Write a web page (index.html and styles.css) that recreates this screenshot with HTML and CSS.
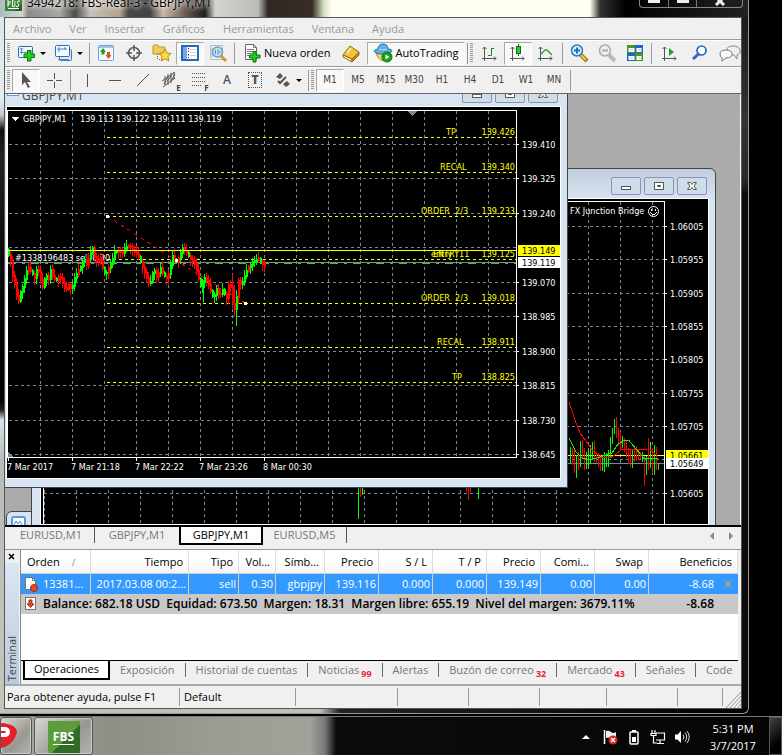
FILE: index.html
```html
<!DOCTYPE html>
<html lang="es">
<head>
<meta charset="utf-8">
<title>FBS-Real-3 - GBPJPY,M1</title>
<link rel="stylesheet" href="styles.css">
</head>
<body>
<div class="app">
  <header class="titlebar">
    <svg class="app-icon" width="17" height="11" viewBox="0 0 17 11"><rect width="17" height="11" rx="1" fill="#3d8136"/><path d="M9 11l8-7v7z" fill="#28602a"/><path d="M3 2h3M3 0v7M3 4h2.500M7.500 0v6.500h2q1.500-1.500 0-3 1.500-2-.5-3M15 1h-2q-1.500 1.500 0 2.500t0 3h-2M3 8.500h11" fill="none" stroke="#fff"/></svg>
    <span class="title">3494218: FBS-Real-3 - GBPJPY,M1</span>
    <div class="caption">
      <button aria-label="Minimizar"><i class="cap-min"></i></button>
      <button aria-label="Maximizar"><i class="cap-min"></i></button>
      <button class="wide" aria-label="Cerrar"><svg width="12" height="6" viewBox="0 0 12 6"><path d="M2-3l8 8M10-3L2 5" stroke="#eee" stroke-width="3"/></svg></button>
    </div>
  </header>

  <div class="client">
    <nav class="menu">
      <button>Archivo</button><button>Ver</button><button>Insertar</button><button>Gráficos</button><button>Herramientas</button><button>Ventana</button><button>Ayuda</button>
    </nav>

    <div class="toolbar">
      <i class="grip"></i>
      <button class="tool drop" aria-label="Nuevo gráfico"><svg width="20" height="20" viewBox="0 0 20 20"><rect x="1.500" y="3.500" width="14" height="11" rx="1" fill="#eef5fd" stroke="#2c6db4"/><path d="M4.500 5v6M3 6.500l1.500-1.500L6 6.500M3 9.500h9M11 7.500l2 2-2 2" fill="none" stroke="#4c86bd"/><path d="M10.500 7.500h3.500v3.500h3.500v3.500H14V18h-3.500v-3.500H7V11h3.500z" fill="#20d020" stroke="#087408"/></svg><i class="arrow"></i></button>
      <button class="tool drop" aria-label="Perfiles"><svg width="20" height="20" viewBox="0 0 20 20"><rect x="5.500" y="6.500" width="12" height="11" rx="1" fill="#d9e8f7" stroke="#4079b5"/><rect x="1.500" y="2.500" width="14" height="11" rx="1" fill="#f4f9ff" stroke="#2c6db4"/><path d="M5 4v5M3 6h10M11 4v3M4 16.500h11" fill="none" stroke="#4c86bd"/></svg><i class="arrow"></i></button>
      <i class="sep"></i>
      <button class="tool" aria-label="Observación de mercado"><svg width="20" height="20" viewBox="0 0 20 20"><rect x="2.500" y="2.500" width="15" height="15" rx="1" fill="#f7fbff" stroke="#67a4dc"/><path d="M3 3h14v2H3z" fill="#9bc8ee"/><path d="M4 9l3-4 3 4H8.500v2.500h-3V9z" fill="#16a816"/><path d="M9.500 12l3 4 3-4H14V9h-3v3z" fill="#e04e20"/></svg></button>
      <button class="tool" aria-label="Ventana de datos"><svg width="20" height="20" viewBox="0 0 20 20"><circle cx="10" cy="10" r="5.500" fill="none" stroke="#555" stroke-width="1.500"/><path d="M10 2v6M10 12v6M2 10h6M12 10h6" stroke="#555" stroke-width="1.500"/></svg></button>
      <button class="tool" aria-label="Navegador"><svg width="20" height="20" viewBox="0 0 20 20"><path d="M1 3.500q0-1.500 1.500-1.500h3l1.500 2h5q1 0 1 1v6H1z" fill="#f3ca52" stroke="#c19323"/><path d="M5.500 11v6M7 16.500h3" stroke="#666" stroke-dasharray="1 1"/><path d="M13 6l2 4 4 .5-3 3 .8 4.500-3.800-2.200L9.200 18l.8-4.500-3-3 4-.5z" fill="#ffd848" stroke="#b88a17"/></svg></button>
      <button class="tool on" aria-label="Terminal"><svg width="20" height="20" viewBox="0 0 20 20"><rect x="2" y="3" width="16" height="14" fill="#fff" stroke="#2569bd" stroke-width="2"/><path d="M3 4h4v12H3z" fill="#71a9ea"/><path d="M8.500 5v10" stroke="#222" stroke-dasharray="1 2"/><path d="M10 6.500h6M10 9.500h6M10 12.500h6" stroke="#c9d6e5"/><path d="M8 6h1M8 12h1" stroke="red"/></svg></button>
      <button class="tool" aria-label="Probador"><svg width="20" height="20" viewBox="0 0 20 20"><path d="M2.500 2.500h12v14h-12z" fill="#eee" stroke="#b5bcc4"/><path d="M4 5v9M7 4v10" stroke="#a6b5c4"/><path d="M13 13l5 5" stroke="#d59b1c" stroke-width="3"/><circle cx="9.500" cy="9" r="5" fill="#cfe6f8" stroke="#6b9dc9" stroke-width="1.500"/><path d="M7.500 7v4M10 6v6M12 8v2" stroke="#5485b8"/></svg></button>
      <i class="sep"></i>
      <button class="tool text"><svg width="20" height="20" viewBox="0 0 20 20"><path d="M3.500 1.500h8l3 3v12h-11z" fill="#fff" stroke="#666"/><path d="M11.500 1.500v3h3M5 6.500h7M5 8.500h7M5 10.500h5M5 12.500h4" fill="none" stroke="#777"/><path d="M11 8.500h3V12h4v3h-4v4h-3v-4H7.500v-3H11z" fill="#20d020" stroke="#087408"/></svg>Nueva orden</button>
      <button class="tool wide" aria-label="MetaEditor"><svg width="20" height="20" viewBox="0 0 20 20"><path d="M2 12l7-9 9 6-7 7z" fill="#f3c23d" stroke="#98650d"/><path d="M2 12l9 4v3l-9-5z" fill="#fff2c0" stroke="#98650d"/><path d="M11 16l7-7v3l-7 7z" fill="#c98915" stroke="#98650d"/><path d="M6 10l4-5" stroke="#ffeaa0" stroke-width="2"/></svg></button>
      <button class="tool text on"><svg width="20" height="20" viewBox="0 0 20 20"><path d="M3 9h14q-1 7-7 9Q4 16 3 9z" fill="#f0ce62" stroke="#b99025"/><path d="M1 8q1-2 4-2 0-5 5-5t5 5q4 0 4 2-1 3-9 3T1 8z" fill="#5faee0" stroke="#2d75ad"/><path d="M6 6q4 2 8 0" fill="none" stroke="#b8e0f8"/><circle cx="14" cy="14" r="5" fill="#16a516" stroke="#0a750a"/><path d="M12.500 11.500v5l4-2.500z" fill="#fff"/></svg>AutoTrading</button>
      <i class="sep"></i><i class="grip"></i>
      <button class="tool" aria-label="Barras"><svg width="20" height="20" viewBox="0 0 20 20"><path d="M4.500 4v14M2 15.500h14M2.500 6l2-2 2 2M14 13.500l2 2-2 2" fill="none" stroke="#555"/><path d="M8 12.500h3.500V5M11 5.500h3" fill="none" stroke="#158a25"/></svg></button>
      <button class="tool on" aria-label="Velas"><svg width="20" height="20" viewBox="0 0 20 20"><path d="M4.500 4v14M2 15.500h14M2.500 6l2-2 2 2M14 13.500l2 2-2 2" fill="none" stroke="#555"/><path d="M10.500 1v12" stroke="#087408"/><rect x="8.500" y="3.500" width="4" height="7" fill="#20d040" stroke="#087408"/></svg></button>
      <button class="tool" aria-label="Línea"><svg width="20" height="20" viewBox="0 0 20 20"><path d="M4.500 4v14M2 15.500h14M2.500 6l2-2 2 2M14 13.500l2 2-2 2" fill="none" stroke="#555"/><path d="M4 12l5-5q2-1 3 1l4 4" fill="none" stroke="#3a9d45" stroke-width="1.500"/></svg></button>
      <i class="sep"></i>
      <button class="tool" aria-label="Acercar"><svg width="20" height="20" viewBox="0 0 20 20"><path d="M12 12l6 6" stroke="#a3750c" stroke-width="4"/><path d="M12 12l5 5" stroke="#f1c93a" stroke-width="2"/><circle cx="8" cy="7.500" r="5.500" fill="#d4edfd" stroke="#2c7ab5" stroke-width="1.500"/><path d="M5 7.500h6M8 4.500v6" stroke="#1d75b5" stroke-width="2"/></svg></button>
      <button class="tool" aria-label="Alejar"><svg width="20" height="20" viewBox="0 0 20 20"><path d="M12 12l6 6" stroke="#bbb" stroke-width="4"/><circle cx="8" cy="7.500" r="5.500" fill="#eee" stroke="#aaa" stroke-width="1.500"/><path d="M5 7.500h6" stroke="#aaa" stroke-width="2"/></svg></button>
      <button class="tool" aria-label="Mosaico"><svg width="20" height="20" viewBox="0 0 20 20"><path d="M2 2h8v8H2zM10 10h8v8h-8z" fill="#429b19"/><path d="M10 2h8v8h-8zM2 10h8v8H2z" fill="#2860d2"/><path d="M3.500 5h6v4h-6zM11.500 5h5v4h-5zM3.500 13h6v4h-6zM11.500 13h5v4h-5z" fill="#fff"/><path d="M5 7h3M13 7h3M5 15h3M13 15h3" stroke="#b4c6df"/></svg></button>
      <i class="sep"></i>
      <button class="tool wide" aria-label="Desplazamiento"><svg width="20" height="20" viewBox="0 0 20 20"><path d="M4.500 4v14M2 15.500h14M2.500 6l2-2 2 2M14 13.500l2 2-2 2" fill="none" stroke="#555"/><path d="M9 5v8l5-4z" fill="#17a32c"/></svg></button>
      <button class="tool" aria-label="Buscar"><svg width="20" height="20" viewBox="0 0 20 20"><path d="M8.500 11L3 16" stroke="#3468ad" stroke-width="3"/><circle cx="11.500" cy="7.500" r="4.500" fill="#fff" stroke="#2865d0" stroke-width="1.700"/></svg></button>
      <button class="tool wide" aria-label="Chat"><svg width="24" height="20" viewBox="0 0 24 20"><path d="M16 12l3 4v-4q4-1 3-5-1-4-7-4t-6 4q0 5 7 5z" fill="#eee" stroke="#888"/><path d="M4 15v3l4-3q6 0 6-4t-6-4-6 4q0 3 2 4z" fill="#fafafa" stroke="#777"/></svg></button>
    </div>

    <div class="toolbar second">
      <i class="grip"></i>
      <button class="tool on" aria-label="Cursor"><svg width="20" height="20" viewBox="0 0 20 20"><path d="M6 2v13l3-3 3 6 2-1-3-5h4z" fill="#555"/></svg></button>
      <button class="tool" aria-label="Cruz"><svg width="20" height="20" viewBox="0 0 20 20"><path d="M10.500 3v6M10.500 12v6M3 10.500h6M12 10.500h6" stroke="#555"/></svg></button>
      <i class="sep"></i>
      <button class="tool" aria-label="Línea vertical"><svg width="20" height="20" viewBox="0 0 20 20"><path d="M10.500 4v13" stroke="#555"/></svg></button>
      <button class="tool" aria-label="Línea horizontal"><svg width="20" height="20" viewBox="0 0 20 20"><path d="M4 10.500h12" stroke="#555"/></svg></button>
      <button class="tool" aria-label="Línea de tendencia"><svg width="20" height="20" viewBox="0 0 20 20"><path d="M4 16L16 4" stroke="#555"/></svg></button>
      <button class="tool" aria-label="Canal"><svg width="20" height="20" viewBox="0 0 20 20"><path d="M1 11L14 2M2 17L14 8M4 6v9M7 4v11M10 3v10M13 2v7M3 14l4-8M6 12l5-8M10 11l4-7" fill="none" stroke="#555"/></svg><small>E</small></button>
      <button class="tool" aria-label="Fibonacci"><svg width="20" height="20" viewBox="0 0 20 20"><path d="M3 3.500h14M3 7.500h14M3 11.500h14M3 15.500h9" stroke="#555" stroke-dasharray="1 1"/></svg><small>F</small></button>
      <button class="tool letter">A</button>
      <button class="tool letter boxed"><b>T</b></button>
      <button class="tool drop" aria-label="Flechas"><svg width="20" height="20" viewBox="0 0 20 20"><path d="M3 7l4-4 3 3-3 3zM10 14l4-3 3 3-4 3z" fill="#555"/><path d="M5 11l2 2 6-6" fill="none" stroke="#555" stroke-width="2"/></svg><i class="arrow"></i></button>
      <i class="sep"></i><i class="grip"></i>
      <button class="tool tf on">M1</button><button class="tool tf">M5</button><button class="tool tf">M15</button><button class="tool tf">M30</button><button class="tool tf">H1</button><button class="tool tf">H4</button><button class="tool tf">D1</button><button class="tool tf">W1</button><button class="tool tf">MN</button>
      <i class="sep"></i>
    </div>

    <main class="mdi">
      <section class="child stub"><svg width="16" height="12" viewBox="0 0 16 12"><rect x="1" y="1" width="13" height="13" rx="2" fill="#fff" stroke="#5f97e3" stroke-width="2"/><path d="M3 9l2-4 2 3 2-3 2 4" fill="none" stroke="#4f8ae0"/></svg></section>
      <section class="child back">
        <header>
          <button aria-label="Minimizar"><svg width="12" height="10" viewBox="0 0 12 10"><rect x="1.500" y="5.500" width="9" height="3" fill="#fff" stroke="#555"/></svg></button>
          <button aria-label="Restaurar"><svg width="12" height="10" viewBox="0 0 12 10"><path d="M1.500 1.500h9v7h-9zM4.500 4.500v1h3v-1z" fill="#fff" stroke="#555"/></svg></button>
          <button aria-label="Cerrar"><svg width="12" height="10" viewBox="0 0 12 10"><path d="M1.500 1.500h3L6 3.500l1.500-2h3L8 5l2.500 3.500h-3L6 6.500l-1.500 2h-3L4 5z" fill="#fff" stroke="#555"/></svg></button>
        </header>
        <svg id="eurusd" class="chart" width="667" height="325" viewBox="41 199 667 325"></svg>
      </section>
      <section class="child front">
        <header>
          <svg width="12" height="12" viewBox="0 0 12 12"><rect x=".5" y="-3.500" width="11" height="11" fill="#fff" stroke="#5f97e3"/><path d="M2 5l2-3 2 3 2-3 2 3" fill="none" stroke="#4f8ae0"/></svg>
          <span>GBPJPY,M1</span>
          <button aria-label="Minimizar"><svg width="12" height="10" viewBox="0 0 12 10"><rect x="1.500" y="5.500" width="9" height="3" fill="#fff" stroke="#555"/></svg></button>
          <button aria-label="Restaurar"><svg width="12" height="10" viewBox="0 0 12 10"><path d="M1.500 1.500h9v7h-9zM4.500 4.500v1h3v-1z" fill="#fff" stroke="#555"/></svg></button>
          <button aria-label="Cerrar"><svg width="12" height="10" viewBox="0 0 12 10"><path d="M1.500 1.500h3L6 3.500l1.500-2h3L8 5l2.500 3.500h-3L6 6.500l-1.500 2h-3L4 5z" fill="#fff" stroke="#555"/></svg></button>
        </header>
        <svg id="gbpjpy" class="chart" width="553" height="371" viewBox="7 107 553 371"></svg>
      </section>
    </main>

    <nav class="chart-tabs">
      <button>EURUSD,M1</button><button>GBPJPY,M1</button><button class="active">GBPJPY,M1</button><button>EURUSD,M5</button>
      <span class="scroll"><button aria-label="Anterior"><svg width="4" height="8" viewBox="0 0 4 8"><path d="M4 0v8L0 4z" fill="#888"/></svg></button><button aria-label="Siguiente"><svg width="4" height="8" viewBox="0 0 4 8"><path d="M0 0v8l4-4z" fill="#888"/></svg></button></span>
    </nav>

    <section class="terminal">
      <aside><button aria-label="Cerrar"><svg width="7" height="7" viewBox="0 0 7 7"><path d="M1 1l5 5M6 1L1 6" stroke="#000" stroke-width="1.500"/></svg></button><div class="side"><span>Terminal</span></div></aside>
      <div class="panel">
        <table>
          <colgroup><col class="w70"><col class="w98"><col class="w50"><col class="w37"><col class="w49"><col class="w54"><col class="w54"><col class="w54"><col class="w54"><col class="w54"><col class="w54"><col></colgroup>
          <thead><tr><th class="first">Orden<i>∕</i></th><th>Tiempo</th><th>Tipo</th><th>Vol...</th><th>Símb...</th><th>Precio</th><th>S / L</th><th>T / P</th><th>Precio</th><th>Comi...</th><th>Swap</th><th>Beneficios</th></tr></thead>
          <tbody>
            <tr class="order"><td class="first"><div class="id"><svg width="14" height="16" viewBox="0 0 14 16"><path d="M1.500 1.500h7l3 3v9h-10z" fill="#fff" stroke="#777"/><path d="M8.500 1.500v3h3" fill="none" stroke="#777"/><circle cx="10" cy="12" r="3.500" fill="#e04d20" stroke="#9c2c10"/></svg>13381...</div></td><td>2017.03.08 00:2...</td><td>sell</td><td>0.30</td><td>gbpjpy</td><td>139.116</td><td>0.000</td><td>0.000</td><td>139.149</td><td>0.00</td><td>0.00</td><td class="profit">-8.68<button aria-label="Cerrar orden"><svg width="8" height="8" viewBox="0 0 8 8"><path d="M1 1l6 6M7 1L1 7" stroke="#a99d93" stroke-width="2"/></svg></button></td></tr>
            <tr class="balance"><td class="first" colspan="11"><div class="id"><svg width="14" height="14" viewBox="0 0 14 14"><rect x="1.500" y=".5" width="10" height="12" fill="#fff" stroke="#777"/><path d="M5 3h3v4h2L6.500 10.500 3 7h2z" fill="#e04d20" stroke="#a33010"/></svg><span>Balance: 682.18 USD&nbsp; Equidad: 673.50&nbsp; Margen: 18.31&nbsp; Margen libre: 655.19&nbsp; Nivel del margen: 3679.11%</span></div></td><td class="sum">-8.68</td></tr>
          </tbody>
        </table>
        <nav class="term-tabs">
          <button class="active">Operaciones</button><button>Exposición</button><button>Historial de cuentas</button><button>Noticias<sub>99</sub></button><button>Alertas</button><button>Buzón de correo<sub>32</sub></button><button>Mercado<sub>43</sub></button><button>Señales</button><button>Code</button>
        </nav>
      </div>
    </section>

    <footer class="status">
      <span class="help">Para obtener ayuda, pulse F1</span><span class="profile">Default</span><span class="s102"></span><span class="s71"></span><span class="s71"></span><span class="s67"></span><span class="s71"></span><span class="s45"></span>
      <svg width="15" height="16" viewBox="0 0 15 16"><path d="M0 16L15 0M4 16L15 4M8 16l7-8M12 16l3-4" stroke="#999"/></svg>
    </footer>
  </div>
</div>

<div class="taskbar">
  <button class="task first" aria-label="P"><svg width="18" height="28" viewBox="0 0 18 28"><path d="M0 1q15 1 16 9-2 10-12 15l-4 1z" fill="#e5202b"/><path d="M0 5h5q4 1 4 5t-4 5H0v-4h4q2-1 0-2H0z" fill="#fff"/></svg></button>
  <button class="task fbs"><span>FBS</span></button>
  <div class="tray">
    <svg width="8" height="4" viewBox="0 0 8 4"><path d="M4 0l4 4H0z" fill="#fff"/></svg>
    <svg width="16" height="16" viewBox="0 0 16 16"><path d="M2.500 1v14" stroke="#fff" stroke-width="1.500"/><path d="M4 2q3-1 5 1t5 0v6q-3 1-5 0T4 9z" fill="#eee"/><circle cx="11" cy="11" r="4.500" fill="#d3271c"/><path d="M9 9l4 4M13 9l-4 4" stroke="#fff" stroke-width="1.500"/></svg>
    <svg width="16" height="16" viewBox="0 0 16 16"><rect x="4" y="3" width="8" height="12" rx="1" fill="none" stroke="#fff" stroke-width="1.500"/><path d="M6 1h4v2H6zM6 8h4v5H6z" fill="#fff"/></svg>
    <svg width="16" height="16" viewBox="0 0 16 16"><path d="M2 1v3M5 1v3M1 4.500h5v2H1zM3.500 6v8H7M6 4h8.500v7H6M10 11v3M7 14.500h7" fill="none" stroke="#fff" stroke-width="1.200"/></svg>
    <svg width="16" height="16" viewBox="0 0 16 16"><path d="M1 5.500h2.500L7 2v12l-3.500-3.500H1z" fill="#fff"/><path d="M9 5.500q2 2.500 0 5M11 3.500q3.500 4.500 0 9M13 2q4.500 6 0 12" fill="none" stroke="#ddd"/></svg>
  </div>
  <div class="clock"><span>5:31 PM</span><span>3/7/2017</span></div>
  <button class="peek" aria-label="Mostrar escritorio"></button>
</div>
<script src="charts.js"></script>
</body>
</html>
```
FILE: styles.css
```css
* { box-sizing: border-box; }
body {
  margin: 0;
  min-height: 100vh;
  display: flex;
  flex-direction: column;
  background: #000;
  color: #000;
  font: 11px/16px "Open Sans", "Noto Sans", sans-serif;
  overflow: hidden;
}
button {
  font: inherit;
  color: inherit;
  background: none;
  border: 0;
  padding: 0;
  margin: 0;
}
svg { display: block; flex: none; }
i { font-style: normal; }

.app {
  flex: 1;
  display: flex;
  flex-direction: column;
  margin-right: 33px;
  padding: 0 6px 4px 4px;
  border-right: 1px solid #999;
  border-bottom: 1px solid #999;
  border-radius: 0 0 6px 0;
  background: linear-gradient(#dce7ec, #e4ecef 100px, #c4cacc 115px, #111 130px, #26231c 160px, #0c0c0c 250px, #000 400px, #222 410px, #d8e4ea 420px, #b9bdb9 460px, #c3c6bc 100%) left / 5px 100% no-repeat,
    linear-gradient(90deg, #bfc0b4 320px, #222 340px, #000) bottom / 100% 5px no-repeat,
    linear-gradient(#181818, #333 120px, #282828 180px, #0b0b0b 195px);
}
.titlebar {
  height: 17px;
  margin: 0 -6px 0 -4px;
  padding-left: 5px;
  display: flex;
  gap: 5px;
  background: linear-gradient(90deg, #aabcc0, #d8d8d0 22px, #8b8b88 28px, #a8a8a2 60px, #4c4c4a 75px, #c5c1b8 90px, #b5a18c 120px, #4a4a48 128px, #41443f 150px, #cbb9a8 163px, #6a5d55 185px, #1c1c1a 205px, #d4d4cc 215px, #bbb 258px, #2f2723 268px, #382c25 312px, #d5e2c0 324px, #fffff2 332px, #fffff2 590px, #333 600px, #000 625px, #222 100%);
  overflow: hidden;
}
.title { font-size: 12px; line-height: 6px; text-shadow: 0 0 4px #fff, 0 0 6px #fff; }
.caption {
  display: flex;
  height: 8px;
  margin-left: auto;
  margin-right: 5px;
  border: 1px solid #888;
  border-top: 0;
  border-radius: 0 0 4px 4px;
}
.caption button { width: 28px; display: flex; justify-content: center; border-left: 1px solid #777; }
.caption button:first-child { border-left: 0; }
.caption .wide { width: 46px; }
.cap-min { width: 12px; height: 3px; background: #eee; }

.client {
  flex: 1;
  display: flex;
  flex-direction: column;
  background: #f0f0f0;
  border: 1px solid #555;
}
.menu {
  height: 21px;
  display: flex;
  align-items: center;
  gap: 18px;
  padding-left: 8px;
  color: #9a9a9a;
}
.toolbar {
  height: 27px;
  display: flex;
  align-items: center;
  border-top: 1px solid #9a9a9a;
  box-shadow: inset 0 1px #fff;
  padding-left: 2px;
}
.toolbar.second { height: 28px; border-bottom: 1px solid #666; }
.toolbar > * { flex: none; }
.grip {
  width: 3px;
  height: 20px;
  margin-right: 3px;
  background: repeating-linear-gradient(#999 0 1px, #f0f0f0 1px 2px);
}
.second .grip { margin-right: 2px; }
.sep { width: 1px; height: 21px; margin: 0 2px; background: #999; }
.tool {
  width: 28px;
  height: 23px;
  display: flex;
  align-items: center;
  justify-content: center;
}
.tool.on {
  background: #f8f8f8;
  border: 1px solid #aaa;
  border-right-color: #fff;
  border-bottom-color: #fff;
}
.tool.drop { width: 37px; gap: 3px; }
.arrow { border: 3px solid transparent; border-top-color: #000; border-bottom: 0; }
.tool.text { width: auto; padding: 0 5px; gap: 2px; }
.tool.wide { width: 32px; }
.tool.letter { font-size: 12px; font-weight: 600; color: #555; }
.boxed b { width: 14px; line-height: 14px; border: 1px dotted #555; }
.tool small { font-size: 8px; line-height: 8px; font-weight: 700; align-self: flex-end; margin-left: -5px; color: #444; }
.tf { color: #444; font-family: "DejaVu Sans Condensed", "DejaVu Sans", sans-serif; font-size: 10px; }

.mdi {
  flex: 1;
  min-height: 300px;
  position: relative;
  overflow: hidden;
  background: #ababab;
  border-right: 1px solid #fff;
}
.child { position: absolute; background: #d7e4f2; border: 1px solid #444; }
.child header {
  display: flex;
  align-items: center;
  gap: 3px;
  color: #444;
}
.child header button {
  width: 30px;
  height: 18px;
  display: flex;
  align-items: center;
  justify-content: center;
  border: 1px solid #8796b0;
  border-radius: 2px;
  background: #cfdcea;
}
.front { left: -1px; top: -22px; width: 564px; height: 416px; padding: 0 7px 8px 2px; }
.front header { height: 34px; padding: 8px 2px 0 0; }
.front header span { flex: 1; padding-top: 4px; font-size: 12px; }
.back { left: 26px; top: 74px; width: 685px; height: 370px; padding: 0 7px 0 9px; border-radius: 6px 6px 0 0; background: linear-gradient(#c0cedb, #d7e4f2 30px); }
.back header { height: 30px; justify-content: flex-end; padding: 3px 1px 0 0; }
.stub { left: 1px; top: 417px; width: 40px; height: 24px; padding: 4px; border-radius: 6px 0 0 0; }
.chart { background: #000; font-family: "DejaVu Sans Condensed", "DejaVu Sans", sans-serif; font-size: 9px; outline: 1px solid #fff; shape-rendering: crispEdges; }
.chart circle { shape-rendering: auto; }
.grid { stroke: #778899; stroke-dasharray: 3 3; fill: none; }
.frame { stroke: #fff; fill: none; }
.level { stroke: #ff0; stroke-dasharray: 3 3; fill: none; }
.ask { stroke: #ff0; }
.bid { stroke: #778899; }
.position { stroke: #32cd32; stroke-dasharray: 8 6 3 6; }
.up { stroke: #0f0; fill: none; }
.down { stroke: #f00; fill: none; }
.dash { stroke-dasharray: 4 4; }
.label { fill: #fff; }
.level-label { fill: #ff0; }
.price-label { fill: #000; }
.end { text-anchor: end; }
.strong { font-weight: 700; }

.chart-tabs {
  height: 25px;
  padding: 0 5px 4px 0;
  display: flex;
  border-top: 2px solid #000;
  border-bottom: 1px solid #999;
  color: #777;
}
.chart-tabs > button { width: 84px; height: 16px; }
.chart-tabs > button:nth-child(1) { width: 90px; padding-left: 3px; border-right: 1px solid #555; }
.chart-tabs > button:nth-child(4) { border-right: 1px solid #555; }
.chart-tabs > button.active { background: #fff; color: #000; border: 2px solid #000; border-top: 0; height: 18px; }
.scroll { margin-left: auto; display: flex; align-items: center; gap: 15px; padding-right: 3px; }

.terminal { height: 134px; display: flex; padding-right: 3px; }
.terminal aside { width: 16px; display: flex; flex-direction: column; border-right: 1px solid #888; }
.terminal aside button { height: 13px; padding-left: 3px; }
.side { flex: 1; margin-right: 1px; display: flex; align-items: flex-end; justify-content: center; background: linear-gradient(#dae6f2, #bccbdb); }
.side span { writing-mode: vertical-rl; transform: rotate(180deg); color: #444; padding-top: 3px; }
.panel { flex: 1; min-width: 0; display: flex; flex-direction: column; background: #fff; }
table { width: 100%; table-layout: fixed; border-collapse: separate; border-spacing: 0; }
.w70 { width: 70px; } .w98 { width: 98px; } .w50 { width: 50px; } .w37 { width: 37px; } .w49 { width: 49px; } .w54 { width: 54px; }
th, td { padding: 0 4px; text-align: right; white-space: nowrap; overflow: hidden; font-weight: 400; }
th { height: 24px; padding-right: 5px; border-right: 1px solid #ddd; border-bottom: 1px solid #ccc; background: linear-gradient(#fff 50%, #f3f4f6); }
th.first { text-align: left; padding-left: 6px; }
th.first i { margin-left: 12px; color: #888; font-size: 10px; }
.order td { height: 20px; background: #3399ff; color: #fff; border-right: 1px solid #d8d0c0; padding-right: 2px; }
.order td:last-child { border-right: 0; }
.id { display: flex; align-items: center; gap: 5px; }
.order td.first { padding-left: 3px; }
.order td.profit { padding-right: 6px; }
.profit button { margin-left: 10px; }
.balance td { height: 20px; background: #c8c8c8; font-weight: 600; font-size: 12px; }
.balance td.first { padding-left: 3px; }
.balance td.sum { padding-right: 24px; }

.term-tabs {
  flex: none;
  height: 24px;
  margin-top: auto;
  padding-left: 2px;
  display: flex;
  overflow: hidden;
  border-top: 1px solid #000;
  background: #f0f0f0;
  color: #777;
  white-space: nowrap;
}
.term-tabs button { height: 14px; margin-top: 2px; padding: 0 10px; border-right: 1px solid #666; line-height: 14px; flex: none; }
.term-tabs button.active { height: 20px; margin-top: -1px; background: #fff; color: #000; border: 2px solid #000; border-top: 0; padding: 0 9px; }
.term-tabs button:last-child { border: 0; }
sub { margin-left: 2px; color: #f02030; font-size: 9px; font-weight: 700; line-height: 0; vertical-align: -3px; }

.status { height: 24px; display: flex; align-items: center; border-top: 2px solid #aaa; }
.status span { height: 18px; line-height: 18px; border-right: 1px solid #999; padding-left: 4px; white-space: nowrap; }
.status .help { width: 175px; padding-left: 2px; }
.status .profile { width: 116px; }
.s102 { width: 102px; } .s71 { width: 71px; } .s67 { width: 67px; } .s45 { width: 45px; }
.status svg { margin-left: auto; align-self: flex-end; }

.taskbar {
  height: 39px;
  margin-top: 2px;
  display: flex;
  border-top: 1px solid #777;
  background: linear-gradient(90deg, #b0aea6, #8e8d86 110px, #9c9b94 220px, #a3a29a 310px, #777 325px, #0c0c0c 336px, #050505);
}
.task { width: 59px; margin-right: 2px; border: 1px solid #555; border-radius: 3px; box-shadow: inset 0 0 1px 1px #ccc; background: linear-gradient(135deg, #d8d8d2, #999890 60%, #b5b4ac); display: flex; justify-content: center; padding-top: 3px; }
.task.first { width: 32px; justify-content: flex-start; padding-top: 4px; }
.fbs span {
  width: 32px;
  height: 32px;
  background: linear-gradient(135deg, #5d9c3b 55%, #326b29 56%);
  color: #fff;
  font: 700 12px/31px "Open Sans", sans-serif;
  text-decoration: underline;
  text-underline-offset: 3px;
}
.tray { margin: 0 7px 0 auto; display: flex; align-items: center; gap: 8px; padding-top: 2px; }
.tray svg:first-child { margin-right: 4px; }
.clock { width: 72px; display: flex; flex-direction: column; align-items: center; justify-content: center; line-height: 17px; color: #fff; padding-top: 2px; }
.peek { width: 13px; border: 1px solid #555; background: linear-gradient(135deg, #444, #000 70%); }
```
FILE: charts.js
```javascript
const NS = 'http://www.w3.org/2000/svg';

function add(svg, tag, attrs, text) {
  const el = document.createElementNS(NS, tag);
  for (const key in attrs) el.setAttribute(key, attrs[key]);
  if (text) el.textContent = text;
  svg.appendChild(el);
}
const path = (svg, cls, d) => add(svg, 'path', { class: cls, d });
const text = (svg, cls, x, y, value) => add(svg, 'text', { class: cls, x, y }, value);

function drawGrid(svg, left, right, top, bottom, xs, rows) {
  xs.forEach(x => path(svg, 'grid', `M${x} ${top}V${bottom}`));
  rows.forEach(([y, value]) => {
    path(svg, 'grid', `M${left} ${y}H${right}`);
    if (!value) return;
    path(svg, 'frame', `M${right} ${y}h3`);
    text(svg, 'label', right + 6, y + 3, value);
  });
}
const columns = (first, last) => {
  const xs = [];
  for (let x = first; x <= last; x += 32) xs.push(x);
  return xs;
};

/* GBPJPY */
const gbp = document.getElementById('gbpjpy');
drawGrid(gbp, 9, 516, 111, 457, columns(40.5, 500), [
  [144.5, '139.410'], [178.5, '139.325'], [213.5, '139.240'], [247.5, ''], [282.5, '139.070'],
  [316.5, '138.985'], [351.5, '138.900'], [385.5, '138.815'], [420.5, '138.730'], [454.5, '138.645']]);
[137.5, 172.5, 216.5, 259.5, 303.5, 347.5, 382.5].forEach(y => path(gbp, 'level', `M107 ${y}H516`));
path(gbp, 'bid', 'M8 262.5H516');
path(gbp, 'position', 'M8 263.5H516');
path(gbp, 'down dash', 'M107 216L177 261L245 303');
text(gbp, 'label', 15, 261, '#1338196483 sell 0.30');

const trend = [[8,250],[12,260],[14,276],[16,284],[18,296],[20,301],[23,288],[25,286],[27,272],[30,268],[33,272],[36,278],[39,266],[42,280],[44,287],[47,275],[50,279],[52,270],[55,279],[58,280],[61,275],[64,283],[67,291],[70,285],[73,290],[76,278],[79,272],[82,267],[85,258],[88,265],[91,256],[94,248],[97,262],[101,258],[104,268],[107,275],[110,268],[113,262],[116,252],[120,251],[124,253],[127,247],[131,246],[135,251],[139,255],[142,262],[145,270],[148,278],[151,286],[155,268],[158,277],[162,268],[165,275],[169,279],[172,265],[174,256],[177,262],[181,257],[183,248],[187,252],[190,256],[193,260],[196,264],[199,275],[202,286],[206,278],[209,282],[212,291],[215,298],[218,289],[221,296],[224,290],[228,298],[231,279],[233,295],[235,312],[237,305],[240,281],[243,285],[247,273],[250,267],[254,262],[257,261],[260,259],[263,263],[266,266]];
const at = x => {
  const k = Math.max(1, trend.findIndex(p => p[0] >= x));
  const [a, b] = [trend[k - 1], trend[k]];
  return a[1] + (b[1] - a[1]) * (x - a[0]) / (b[0] - a[0]);
};
const candles = { up: '', down: '' };
for (let x = 8, n = 0; x <= 264; x += 2, n++) {
  const open = at(x), close = at(x + 2);
  const high = Math.min(open, close), low = Math.max(open, close);
  const kind = (close > open ? n % 6 !== 0 : n % 5 === 0) ? 'down' : 'up';
  candles[kind] += `M${x + 0.5} ${Math.round(high - 2 - n * 7 % 6)}V${Math.round(low + 2 + n * 5 % 6)}`;
  candles[kind] += `M${x + 1.5} ${Math.round(high - 1)}V${Math.round(low + 1)}`;
}
path(gbp, 'up', candles.up + 'M203.5 280V302M236.5 290V326');
path(gbp, 'down', candles.down + 'M234.5 285V316M232.5 274V290');
path(gbp, 'ask', 'M8 250.5H516');
[[107, 216], [176, 260], [245, 303]].forEach(([x, y]) =>
  add(gbp, 'rect', { x: x - 1, y: y - 1, width: 3, height: 3, fill: '#fff' }));
[['TP', 446, 135, '139.426'], ['RECAL', 440, 170, '139.340'], ['ORDER\u00a0 2/3', 421, 214, '139.233'], ['ENTRY11', 433, 257, '139.125'],
 ['ORDER\u00a0 2/3', 421, 301, '139.018'], ['RECAL', 437, 345, '138.911'], ['TP', 452, 380, '138.825']].forEach(([name, x, y, price]) => {
  text(gbp, 'level-label', x, y, name);
  text(gbp, 'level-label end', 515, y, price);
});
text(gbp, 'level-label', 431, 257, 'entry');
path(gbp, 'frame', 'M7.5 457.5V110.5H516.5V457.5H8');
add(gbp, 'path', { d: 'M407 111h10l-5 5zM8 457v-5l5 5z', fill: '#778899' });
add(gbp, 'path', { d: 'M11 117h8l-4 4z', fill: '#fff' });
text(gbp, 'label', 23, 122, 'GBPJPY,M1');
text(gbp, 'label', 80, 122, '139.113 139.122 139.111 139.119');
add(gbp, 'rect', { x: 518, y: 245, width: 42, height: 11, fill: '#ff0' });
add(gbp, 'rect', { x: 518, y: 257, width: 42, height: 11, fill: '#fff' });
text(gbp, 'price-label', 522, 254, '139.149');
text(gbp, 'price-label', 522, 266, '139.119');
['7 Mar 2017', '7 Mar 21:18', '7 Mar 22:22', '7 Mar 23:26', '8 Mar 00:30'].forEach((value, k) => {
  path(gbp, 'frame', `M${8.5 + 64 * k} 458v3`);
  text(gbp, 'label', 7 + 64 * k, 470, value);
});

/* EURUSD */
const eur = document.getElementById('eurusd');
drawGrid(eur, 44, 664, 202, 524, columns(44.5, 660), [
  [226.5, '1.06005'], [259.5, '1.05955'], [293.5, '1.05905'], [326.5, '1.05855'], [359.5, '1.05805'],
  [393.5, '1.05755'], [426.5, '1.05705'], [459.5, ''], [493.5, '1.05605']]);
path(eur, 'ask', 'M44 455.5H664');
path(eur, 'bid', 'M44 463.5H664');
const bars = 'g447-463 r448-465 r450-473 g455-478 r452-470 g441-467 r440-460 r448-470 g452-469 g450-468 g445-464 g442-460 r441-462 r452-463 r453-467 r455-471 g455-471 g452-472 g453-467 g450-467 g437-457 g428-444 g419-434 r417-438 r428-446 r432-450 g436-448 r438-452 r440-458 r448-464 r450-467 g449-468 r447-462 r446-461 r450-460 r452-459 g452-462 r456-486 g456-475 r438-470 g442-468 r448-473 g445-475 r447-470 g463-470';
bars.split(' ').forEach((bar, k) => {
  const [high, low] = bar.slice(1).split('-');
  path(eur, bar[0] === 'g' ? 'up' : 'down', `M${570.5 + 2 * k} ${high}V${low}`);
});
path(eur, 'up', 'M358.5 480V519M362.5 480V495M478.5 480V499');
path(eur, 'down', 'M360.5 480V497M466.5 480V492M468.5 480V500M470.5 480V492');
path(eur, 'down', 'M569 402L575 420L580 433L586 441L592 450L600 457L610 458L616 454L622 449.5H650L656 455');
path(eur, 'up', 'M569 438L576 452L582 458L590 460L600 457L612 453L618 444L624 440.5H629L636 449L644 458.5H658');
path(eur, 'frame', 'M43.5 524V201.5H664.5V524');
text(eur, 'label', 570, 214, 'FX Junction Bridge');
add(eur, 'circle', { class: 'frame', cx: 653.5, cy: 211.5, r: 5 });
path(eur, 'frame', 'M651.5 209v2M655.5 209v2M650.5 212.500q3 4 6 0');
add(eur, 'rect', { x: 666, y: 450, width: 42, height: 11, fill: '#ff0' });
text(eur, 'price-label', 670, 459, '1.05661');
add(eur, 'rect', { x: 666, y: 458, width: 42, height: 11, fill: '#fff' });
text(eur, 'price-label', 670, 467, '1.05649');
```
